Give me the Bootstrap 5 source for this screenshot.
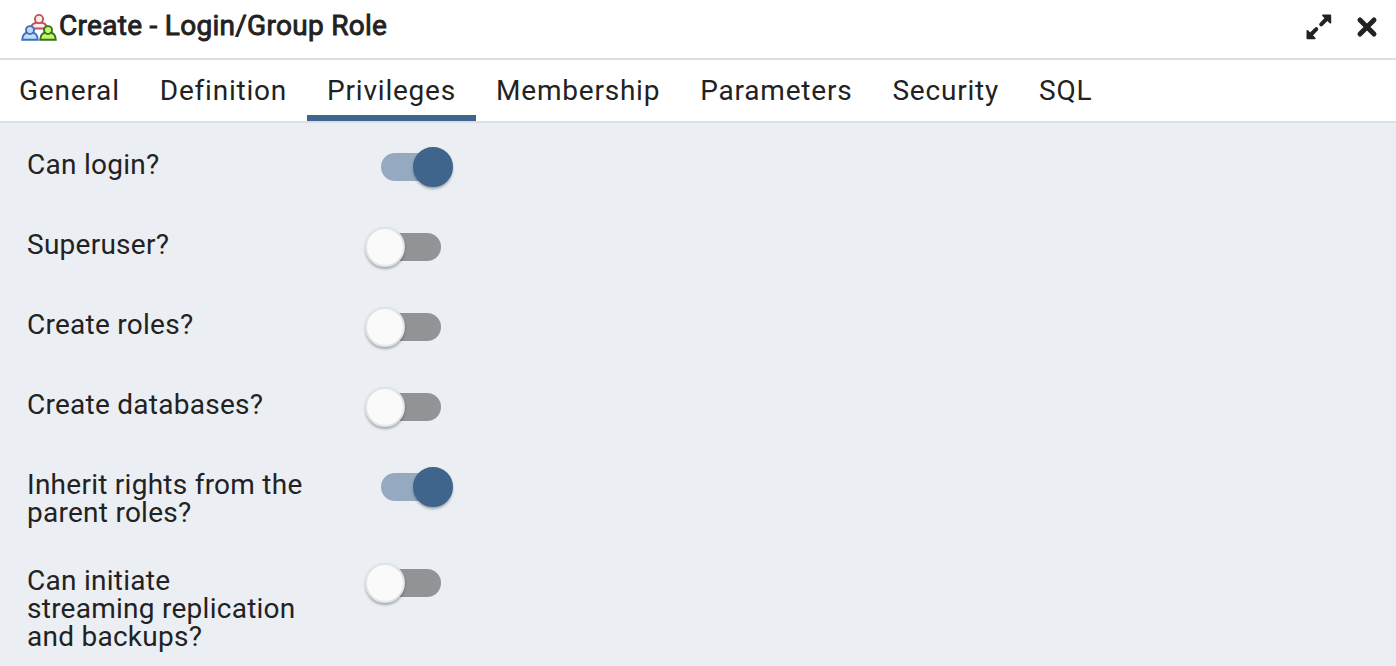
<!DOCTYPE html>
<html lang="en">
<head>
<meta charset="utf-8">
<meta name="viewport" content="width=device-width, initial-scale=1">
<title>Create - Login/Group Role</title>
<link href="https://cdn.jsdelivr.net/npm/bootstrap@5.3.0/dist/css/bootstrap.min.css" rel="stylesheet">
<style>
  body { font-family: Roboto, sans-serif; font-size: 28px; line-height: 28px; color: #222; background: #ebeef3; letter-spacing: .26px; height: 100vh; overflow: hidden; }
  .dialog-head { height: 60px; padding: 0 18px 5px 21px; border-bottom: 2px solid #dddfe5; }
  .dialog-title { font-size: 28px; line-height: 34px; font-weight: 400; -webkit-text-stroke: .9px #222; letter-spacing: .29px; margin: 0 0 1px 2px; }
  .icon-button { line-height: 0; color: #222; }
  .dialog-tabs { height: 63px; border-bottom: 2px solid #dbdfe4; }
  .dialog-tabs .nav-item:first-child { margin-left: -1px; }
  .dialog-tabs .nav-link { height: 61px; padding: 17px 20px 10px; line-height: 28px; color: #222; letter-spacing: .79px; border-bottom: 6px solid transparent; white-space: nowrap; }
  .dialog-tabs .nav-link.active { border-bottom-color: #3f658c; }
  .privilege { padding-left: 27px; margin-bottom: 36px; min-height: 44px; }
  .privilege-label { width: 278px; padding-top: 4px; }
  .toggle { width: 60px; height: 28px; border-radius: 14px; background: #929397; margin: 6px 0 0 76px; }
  .toggle::after { content: ""; position: absolute; left: -16px; top: -6px; width: 40px; height: 40px; border-radius: 50%; background: #fafafa; border: 2px solid #e1e3ea; box-shadow: 0 3px 3px -1px rgba(0,0,0,.25), 0 1px 3px rgba(0,0,0,.14); }
  .toggle[aria-checked="true"] { background: #95a9c1; }
  .toggle[aria-checked="true"]::after { left: 32px; background: #3f658c; border-color: #3f658c; }
</style>
</head>
<body class="d-flex flex-column">
<header class="dialog-head d-flex align-items-center bg-white flex-shrink-0">
  <svg width="36" height="28" viewBox="0 0 36 28" stroke-width="1.900" class="mb-0" aria-hidden="true">
    <g fill="#fcecec" stroke="#c15353"><path d="M10 15.500c.2-3 2-5.200 5.300-5.700h5.400c3.300.5 5.100 2.700 5.300 5.700z"/><circle cx="18" cy="6" r="4.100"/></g>
    <g fill="#c5dcf5" stroke="#3b6fc4"><path d="M1.200 26.700c.2-4.500 2.500-6.900 5.800-7.500h4c3.300.6 5.600 3 5.800 7.500z"/><circle cx="9" cy="17.100" r="4"/></g>
    <g fill="#c5f76c" stroke="#37721d"><path d="M19.200 26.700c.2-4.500 2.500-6.900 5.800-7.500h4c3.300.6 5.600 3 5.800 7.500z"/><circle cx="27" cy="17.100" r="4"/></g>
  </svg>
  <h1 class="dialog-title">Create - Login/Group Role</h1>
  <button class="icon-button btn p-0 border-0 ms-auto" aria-label="Maximize">
    <svg width="26" height="26" viewBox="0 0 26 26" fill="currentColor" stroke="currentColor" stroke-linecap="round" stroke-linejoin="round"><path stroke-width="4" d="M15.200 10.300 20.500 5M10.300 15.200 5 20.500"/><path stroke-width="1.800" d="M17 1.400h7.300v7.300zM1.400 17v7.300h7.300z"/></svg>
  </button>
  <button class="icon-button btn p-0 border-0 ms-4" aria-label="Close">
    <svg width="22" height="22" viewBox="0 0 22 22" fill="none" stroke="currentColor" stroke-width="5" stroke-linecap="round"><path d="m4 4 14 14M18 4 4 18"/></svg>
  </button>
</header>
<ul class="dialog-tabs nav flex-nowrap bg-white flex-shrink-0">
  <li class="nav-item"><a class="nav-link" href="#">General</a></li>
  <li class="nav-item"><a class="nav-link" href="#">Definition</a></li>
  <li class="nav-item"><a class="nav-link active" href="#">Privileges</a></li>
  <li class="nav-item"><a class="nav-link" href="#">Membership</a></li>
  <li class="nav-item"><a class="nav-link" href="#">Parameters</a></li>
  <li class="nav-item"><a class="nav-link" href="#">Security</a></li>
  <li class="nav-item"><a class="nav-link" href="#">SQL</a></li>
</ul>
<main class="pt-4">
  <div class="privilege d-flex align-items-start"><div class="privilege-label">Can login?</div><button class="toggle position-relative border-0 p-0" role="switch" aria-checked="true" aria-label="Can login?"></button></div>
  <div class="privilege d-flex align-items-start"><div class="privilege-label">Superuser?</div><button class="toggle position-relative border-0 p-0" role="switch" aria-checked="false" aria-label="Superuser?"></button></div>
  <div class="privilege d-flex align-items-start"><div class="privilege-label">Create roles?</div><button class="toggle position-relative border-0 p-0" role="switch" aria-checked="false" aria-label="Create roles?"></button></div>
  <div class="privilege d-flex align-items-start"><div class="privilege-label">Create databases?</div><button class="toggle position-relative border-0 p-0" role="switch" aria-checked="false" aria-label="Create databases?"></button></div>
  <div class="privilege d-flex align-items-start"><div class="privilege-label">Inherit rights from the parent roles?</div><button class="toggle position-relative border-0 p-0" role="switch" aria-checked="true" aria-label="Inherit rights"></button></div>
  <div class="privilege d-flex align-items-start"><div class="privilege-label">Can initiate streaming replication and backups?</div><button class="toggle position-relative border-0 p-0" role="switch" aria-checked="false" aria-label="Replication"></button></div>
</main>
<script src="https://cdn.jsdelivr.net/npm/bootstrap@5.3.0/dist/js/bootstrap.bundle.min.js"></script>
</body>
</html>
